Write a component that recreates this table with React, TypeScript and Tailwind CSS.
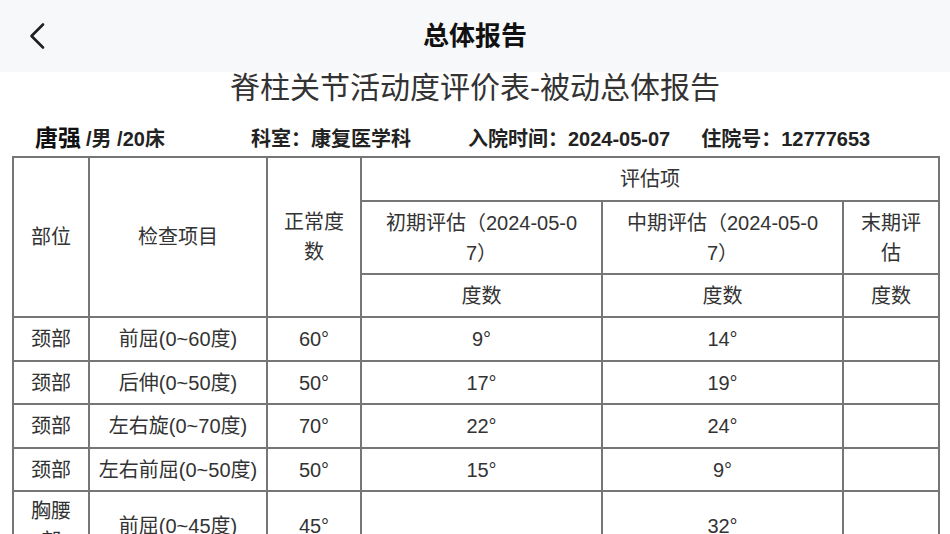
import React from "react";

const rows = [
  { part: "颈部", item: "前屈(0~60度)", normal: "60°", a: "9°", b: "14°", c: "" },
  { part: "颈部", item: "后伸(0~50度)", normal: "50°", a: "17°", b: "19°", c: "" },
  { part: "颈部", item: "左右旋(0~70度)", normal: "70°", a: "22°", b: "24°", c: "" },
  { part: "颈部", item: "左右前屈(0~50度)", normal: "50°", a: "15°", b: "9°", c: "" },
  { part: "胸腰部", item: "前屈(0~45度)", normal: "45°", a: "", b: "32°", c: "" },
];

const font = { fontFamily: '"Liberation Sans", "Noto Sans CJK SC", sans-serif' };

export default function App() {
  const td = "border-2 border-[#767676] text-center align-middle break-all py-1";
  return (
    <div className="w-[950px] h-[534px] overflow-hidden bg-white text-[#333]" style={font}>
      <div className="relative h-[72px] bg-[#f7f8fa] flex items-center justify-center">
        <svg className="absolute left-[28px] top-[22px]" width="20" height="28" viewBox="0 0 20 28">
          <path d="M15 2.5 L3.5 14 L15 25.5" fill="none" stroke="#1f1f1f" strokeWidth="2.6" strokeLinecap="round" strokeLinejoin="round" />
        </svg>
        <div className="text-[26px] font-bold text-[#111] leading-none">总体报告</div>
      </div>
      <div className="h-[32px] leading-[32px] text-center text-[30px] text-[#333]">
        脊柱关节活动度评价表-被动总体报告
      </div>
      <div className="flex items-baseline pt-[19px] h-[49px] leading-[30px] text-[20px] font-semibold text-[#222]">
        <span className="ml-[35px] text-[23px] font-bold text-[#111]">唐强</span>
        <span className="ml-[5px] font-bold">/男 /20床</span>
        <span className="ml-[86px]">科室：康复医学科</span>
        <span className="ml-[57px]">入院时间：<span className="font-bold">2024-05-07</span></span>
        <span className="ml-[31px]">住院号：<span className="font-bold">12777653</span></span>
      </div>
      <div className="mt-[3px] pl-[12px]">
        <table className="table-fixed border-collapse w-[926px] text-[20px] leading-[30px]">
          <colgroup>
            <col className="w-[76px]" />
            <col className="w-[178px]" />
            <col className="w-[94px]" />
            <col className="w-[241px]" />
            <col className="w-[241px]" />
            <col className="w-[96px]" />
          </colgroup>
          <tbody>
            <tr className="h-[44px]">
              <td rowSpan={3} className={`${td} px-2`}>部位</td>
              <td rowSpan={3} className={`${td} px-2`}>检查项目</td>
              <td rowSpan={3} className={`${td} px-2`}>正常度数</td>
              <td colSpan={3} className={`${td} px-2`}>评估项</td>
            </tr>
            <tr className="h-[73px]">
              <td className={`${td} px-5`}>初期评估（2024-05-07）</td>
              <td className={`${td} px-5`}>中期评估（2024-05-07）</td>
              <td className={`${td} px-2`}>末期评估</td>
            </tr>
            <tr className="h-[43px]">
              <td className={`${td} px-2`}>度数</td>
              <td className={`${td} px-2`}>度数</td>
              <td className={`${td} px-2`}>度数</td>
            </tr>
            {rows.map((r, i) => (
              <tr key={i} className={i % 2 === 0 ? "h-[44px]" : "h-[43px]"}>
                <td className={`${td} px-2`}>{r.part}</td>
                <td className={`${td} px-1 whitespace-nowrap`}>{r.item}</td>
                <td className={`${td} px-2`}>{r.normal}</td>
                <td className={`${td} px-2`}>{r.a}</td>
                <td className={`${td} px-2`}>{r.b}</td>
                <td className={`${td} px-2`}>{r.c}</td>
              </tr>
            ))}
          </tbody>
        </table>
      </div>
    </div>
  );
}
